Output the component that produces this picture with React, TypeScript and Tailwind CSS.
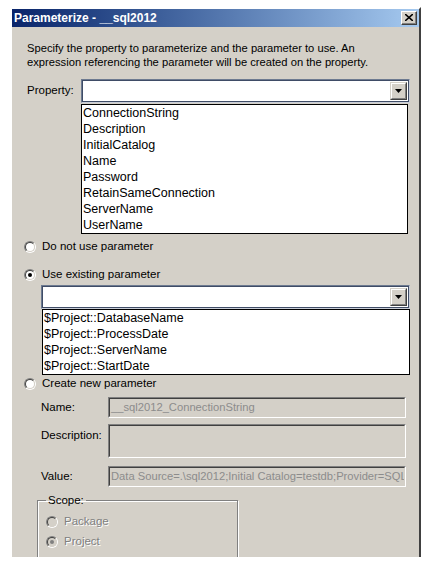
import React from "react";

function Radio({ checked = false, disabled = false }: { checked?: boolean; disabled?: boolean }) {
  return (
    <span className="flex h-[12px] w-[12px] shrink-0 rounded-full border border-t-[#808080] border-l-[#808080] border-r-white border-b-white">
      <span
        className={
          "flex flex-1 items-center justify-center rounded-full border border-t-[#404040] border-l-[#404040] border-r-[#d4d0c8] border-b-[#d4d0c8] " +
          (disabled ? "bg-[#d4d0c8]" : "bg-white")
        }
      >
        {checked && (
          <span className={"h-[4px] w-[4px] rounded-full " + (disabled ? "bg-[#808080]" : "bg-black")} />
        )}
      </span>
    </span>
  );
}

function DropButton() {
  return (
    <div className="flex h-full w-[17px] items-center justify-center border border-t-[#d4d0c8] border-l-[#d4d0c8] border-r-[#404040] border-b-[#404040] bg-[#d4d0c8]">
      <div className="flex h-full w-full items-center justify-center border border-t-white border-l-white border-r-[#808080] border-b-[#808080]">
        <svg width="7" height="4" viewBox="0 0 7 4">
          <path d="M0 0H7L3.5 4Z" fill="#000" />
        </svg>
      </div>
    </div>
  );
}

function Combo({ className = "" }: { className?: string }) {
  return (
    <div className={"flex h-[24px] border border-t-[#6d7a90] border-l-[#6d7a90] border-r-[#c9ced8] border-b-[#c9ced8] " + className}>
      <div className="flex flex-1 border border-[#3f4c66] bg-white p-[1px]">
        <div className="flex-1" />
        <DropButton />
      </div>
    </div>
  );
}

function List({ items, className = "" }: { items: string[]; className?: string }) {
  return (
    <div className={"flex flex-col border border-black bg-white text-[12.5px] leading-[16px] text-black " + className}>
      {items.map((t) => (
        <div key={t} className="h-[16px] whitespace-nowrap pl-[1px]">
          {t}
        </div>
      ))}
    </div>
  );
}

function Disabled({ text = "", h }: { text?: string; h: string }) {
  return (
    <div className={"flex w-[298px] border border-t-[#808080] border-l-[#808080] border-r-white border-b-white " + h}>
      <div className="flex flex-1 overflow-hidden border border-t-[#404040] border-l-[#404040] border-r-[#d4d0c8] border-b-[#d4d0c8] bg-[#d4d0c8] pl-[1px] pt-[1px] text-[11.2px] leading-[15px] text-[#8c8c8c] whitespace-nowrap">
        {text}
      </div>
    </div>
  );
}

export default function App() {
  return (
    <div className="min-h-[563px] w-[425px] bg-white pl-[10px] pt-[7px] font-['Liberation_Sans',Arial,sans-serif]">
      <div className="flex h-[550px] w-[411px] flex-col overflow-hidden border-l-2 border-r-2 border-t-2 border-t-white border-l-white border-r-[#404040] bg-[#d4d0c8]">
        {/* Title bar */}
        <div className="flex h-[18px] shrink-0 items-center bg-gradient-to-r from-[#0a246a] to-[#a6caf0] pl-[2px] pr-[2px]">
          <span className="flex-1 text-[12px] font-bold leading-[18px] text-white">Parameterize - __sql2012</span>
          <div className="flex h-[14px] w-[16px] border border-t-white border-l-white border-r-[#404040] border-b-[#404040] bg-[#d4d0c8]">
            <div className="flex flex-1 items-center justify-center border-r border-b border-[#808080]">
              <svg width="8" height="7" viewBox="0 0 8 7">
                <path d="M0 0L8 7M8 0L0 7" stroke="#000" strokeWidth="1.6" />
              </svg>
            </div>
          </div>
        </div>

        <div className="flex flex-col text-[11.5px] text-black">
          <p className="ml-[15px] mt-[14px] w-[380px] text-[11.2px] leading-[14px]">
            Specify the property to parameterize and the parameter to use. An expression referencing the parameter will be
            created on the property.
          </p>

          <div className="mt-[10px] flex items-center">
            <span className="ml-[15px] w-[54px]">Property:</span>
            <Combo className="w-[329px]" />
          </div>
          <List
            className="ml-[69px] mt-px w-[327px]"
            items={[
              "ConnectionString",
              "Description",
              "InitialCatalog",
              "Name",
              "Password",
              "RetainSameConnection",
              "ServerName",
              "UserName",
            ]}
          />

          <div className="ml-[12px] mt-[5px] flex h-[16px] items-center gap-[6px]">
            <Radio />
            <span>Do not use parameter</span>
          </div>
          <div className="ml-[12px] mt-[12px] flex h-[16px] items-center gap-[6px]">
            <Radio checked />
            <span>Use existing parameter</span>
          </div>
          <Combo className="ml-[29px] mt-[2px] w-[369px]" />
          <List
            className="ml-[30px] w-[368px]"
            items={["$Project::DatabaseName", "$Project::ProcessDate", "$Project::ServerName", "$Project::StartDate"]}
          />
          <div className="ml-[12px] mt-[1px] flex h-[16px] items-center gap-[6px]">
            <Radio />
            <span>Create new parameter</span>
          </div>

          <div className="mt-[5px] flex items-center">
            <span className="ml-[29px] w-[67px]">Name:</span>
            <Disabled h="h-[21px]" text="__sql2012_ConnectionString" />
          </div>
          <div className="mt-[6px] flex items-start">
            <span className="ml-[29px] mt-[3px] w-[67px]">Description:</span>
            <Disabled h="h-[34px]" />
          </div>
          <div className="mt-[8px] flex items-center">
            <span className="ml-[29px] w-[67px]">Value:</span>
            <Disabled h="h-[21px]" text="Data Source=.\sql2012;Initial Catalog=testdb;Provider=SQL" />
          </div>

          <fieldset className="ml-[25px] mt-[6px] h-[80px] w-[201px] border border-[#808080] shadow-[1px_1px_0_#fff,inset_1px_1px_0_#fff]">
            <legend className="ml-[8px] px-[2px] leading-[14px]">Scope:</legend>
            <div className="ml-[8px] mt-[7px] flex h-[16px] items-center gap-[6px]">
              <Radio disabled />
              <span className="text-[#808080] [text-shadow:1px_1px_0_#fff]">Package</span>
            </div>
            <div className="ml-[8px] mt-[4px] flex h-[16px] items-center gap-[6px]">
              <Radio disabled checked />
              <span className="text-[#808080] [text-shadow:1px_1px_0_#fff]">Project</span>
            </div>
          </fieldset>
        </div>
      </div>
    </div>
  );
}
